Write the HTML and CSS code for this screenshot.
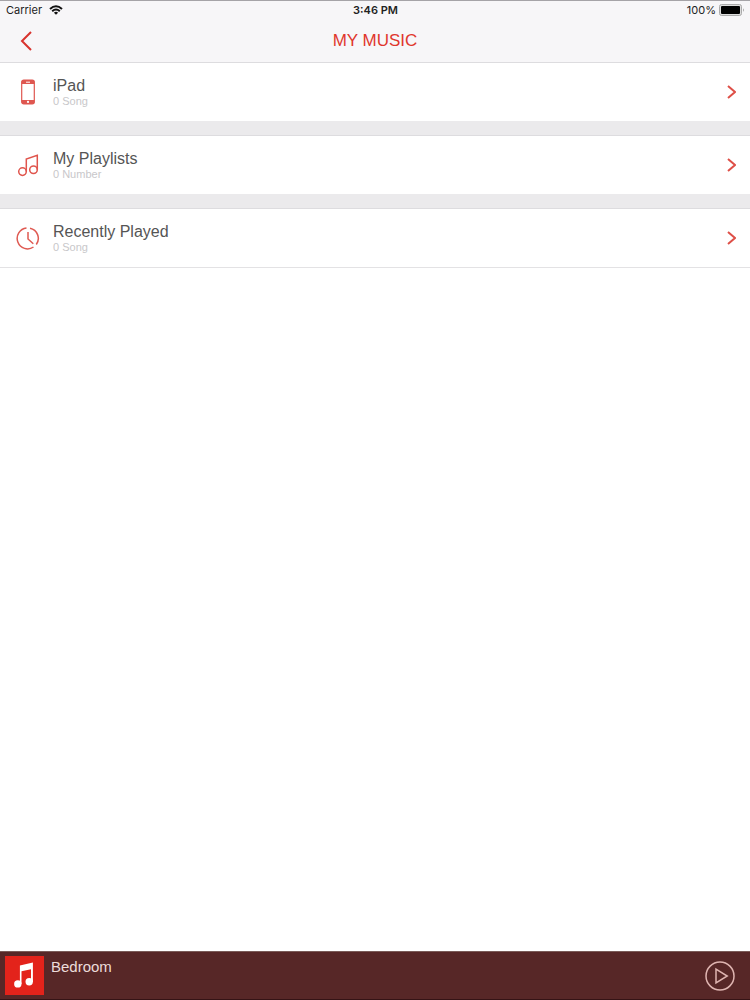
FILE: index.html
```html
<!DOCTYPE html>
<html lang="en">
<head>
    <meta charset="UTF-8">
    <meta name="viewport" content="width=device-width, initial-scale=1.0">
    <title>My Music</title>
    <link rel="stylesheet" href="styles.css">
</head>
<body>
    <header class="header">
        <div class="status-bar">
            <div class="carrier">
                <span>Carrier</span>
                <svg width="14" height="10" viewBox="0 0 14 10" fill="none" stroke="#111" stroke-width="2">
                    <path d="M1 4Q7-1.6 13 4M3.2 6.3Q7 2.8 10.8 6.3"/>
                    <path d="M7 9.8L4.9 7.7Q7 6 9.1 7.7Z" fill="#111" stroke="none"/>
                </svg>
            </div>
            <span class="time">3:46 PM</span>
            <div class="battery">
                <span>100%</span>
                <svg width="26" height="12" viewBox="0 0 26 12">
                    <rect x="0.5" y="0.5" width="22" height="11" rx="2" fill="#ddd" stroke="#aaa"/>
                    <rect x="2" y="2" width="19" height="8" rx="1" fill="#000"/>
                    <path d="M24 4.2Q26 6 24 7.8Z" fill="#aaa"/>
                </svg>
            </div>
        </div>
        <div class="nav-bar">
            <button class="back" type="button" aria-label="Back">
                <svg width="12" height="20" viewBox="0 0 12 20" fill="none" stroke="#d8332e" stroke-width="2">
                    <path d="M11 1L2 10L11 19"/>
                </svg>
            </button>
            <h1>MY MUSIC</h1>
        </div>
    </header>

    <main class="list">
        <a class="row" href="#ipad">
            <svg class="icon" width="24" height="26" viewBox="0 0 24 26">
                <rect x="5.7" y="1.2" width="12.6" height="23.6" rx="2" fill="#fff" stroke="#df5750" stroke-width="1.2"/>
                <path d="M5.5 5V3Q5.5 1 7.5 1H16.5Q18.5 1 18.5 3V5ZM5.5 21H18.5V23Q18.5 25 16.5 25H7.5Q5.5 25 5.5 23Z" fill="#df5750"/>
                <path d="M10 3.2H14" stroke="#fff"/>
                <circle cx="12" cy="22.9" r="1.1" fill="#fff"/>
            </svg>
            <span class="text">
                <span class="name">iPad</span>
                <span class="count">0 Song</span>
            </span>
            <svg class="arrow" width="9" height="14" viewBox="0 0 9 14"><path d="M1 1L8 7L1 13"/></svg>
        </a>
        <a class="row" href="#playlists">
            <svg class="icon" width="24" height="26" viewBox="0 0 24 26" fill="none" stroke="#e0554d" stroke-width="1.5">
                <circle cx="6.5" cy="19.6" r="3.8"/>
                <circle cx="17.5" cy="17.8" r="3.8"/>
                <path d="M10.3 19.6V7L21.3 3.4V17.8"/>
            </svg>
            <span class="text">
                <span class="name">My Playlists</span>
                <span class="count">0 Number</span>
            </span>
            <svg class="arrow" width="9" height="14" viewBox="0 0 9 14"><path d="M1 1L8 7L1 13"/></svg>
        </a>
        <a class="row" href="#recent">
            <svg class="icon" width="24" height="26" viewBox="0 0 24 26" fill="none" stroke="#df5a52" stroke-width="1.5">
                <path d="M10.5 3.1A10.4 10.4 0 1 0 17.5 22"/>
                <path d="M14 3.2A10.4 10.4 0 0 1 20.3 19.5"/>
                <path d="M12 7V14L17.3 18.8"/>
            </svg>
            <span class="text">
                <span class="name">Recently Played</span>
                <span class="count">0 Song</span>
            </span>
            <svg class="arrow" width="9" height="14" viewBox="0 0 9 14"><path d="M1 1L8 7L1 13"/></svg>
        </a>
    </main>

    <footer class="player">
        <svg class="cover" width="39" height="39" viewBox="0 0 39 39">
            <rect width="39" height="39" fill="#e3231b"/>
            <circle cx="12.8" cy="27.9" r="3.7" fill="#fff"/>
            <circle cx="24.2" cy="25.8" r="3.7" fill="#fff"/>
            <path d="M14.9 9.6L27.9 6.6V26H26V13.2L16.5 15.2V28H14.9Z" fill="#fff"/>
        </svg>
        <span class="room">Bedroom</span>
        <button class="play" type="button" aria-label="Play">
            <svg width="30" height="30" viewBox="0 0 30 30" fill="none" stroke="#dfb5b1" stroke-width="1.5">
                <circle cx="15" cy="15" r="14"/>
                <path d="M11 8.2L22.2 15L11 21.8Z"/>
            </svg>
        </button>
    </footer>
</body>
</html>
```

FILE: styles.css
```css
* {
    margin: 0;
    padding: 0;
    box-sizing: border-box;
}

body {
    display: flex;
    flex-direction: column;
    min-height: 100vh;
    font-family: "Liberation Sans", Arial, sans-serif;
    background: #fff;
}

button {
    background: none;
    border: none;
    cursor: pointer;
}

svg {
    display: block;
    flex-shrink: 0;
}

.header {
    background: #f7f6f8;
    border-top: 1px solid #a5a3a7;
    border-bottom: 1px solid #cbcacd;
}

.status-bar {
    display: grid;
    grid-template-columns: 1fr auto 1fr;
    align-items: center;
    height: 18px;
    padding: 0 5px 0 6px;
    font-family: Inter, sans-serif;
    font-size: 11px;
    color: #222;
}

.carrier,
.battery {
    display: flex;
    align-items: center;
    gap: 7px;
}

.battery {
    justify-content: flex-end;
    gap: 3px;
}

.time {
    font-weight: 600;
}

.nav-bar {
    display: grid;
    grid-template-columns: 52px 1fr 52px;
    align-items: center;
    height: 43px;
}

.back {
    display: flex;
    justify-content: center;
    padding: 8px 0;
}

.nav-bar h1 {
    font-size: 17px;
    font-weight: normal;
    line-height: 20px;
    text-align: center;
    color: #e0362d;
}

.list {
    display: flex;
    flex-direction: column;
    gap: 15px;
    background: #ebeaec;
    border-bottom: 1px solid #e3e2e4;
}

.row {
    display: flex;
    align-items: center;
    height: 58px;
    padding: 0 14px 0 16px;
    background: #fff;
    box-shadow: 0 -1px 0 #dddcdf;
    text-decoration: none;
}

.text {
    display: flex;
    flex-direction: column;
    flex: 1;
    margin-left: 13px;
}

.name {
    font-size: 16px;
    line-height: 18px;
    color: #555;
}

.count {
    font-size: 11px;
    line-height: 12px;
    color: #c8c7ca;
}

.arrow {
    fill: none;
    stroke: #de4f47;
    stroke-width: 2;
}

.player {
    display: flex;
    align-items: center;
    height: 49px;
    margin-top: auto;
    padding: 0 15px 0 5px;
    background: #572727;
    border-top: 1px solid #7a5b58;
    border-bottom: 1px solid #351315;
}

.room {
    flex: 1;
    align-self: flex-start;
    margin: 6px 0 0 7px;
    font-size: 15px;
    line-height: 18px;
    color: #ecdcda;
}
```
